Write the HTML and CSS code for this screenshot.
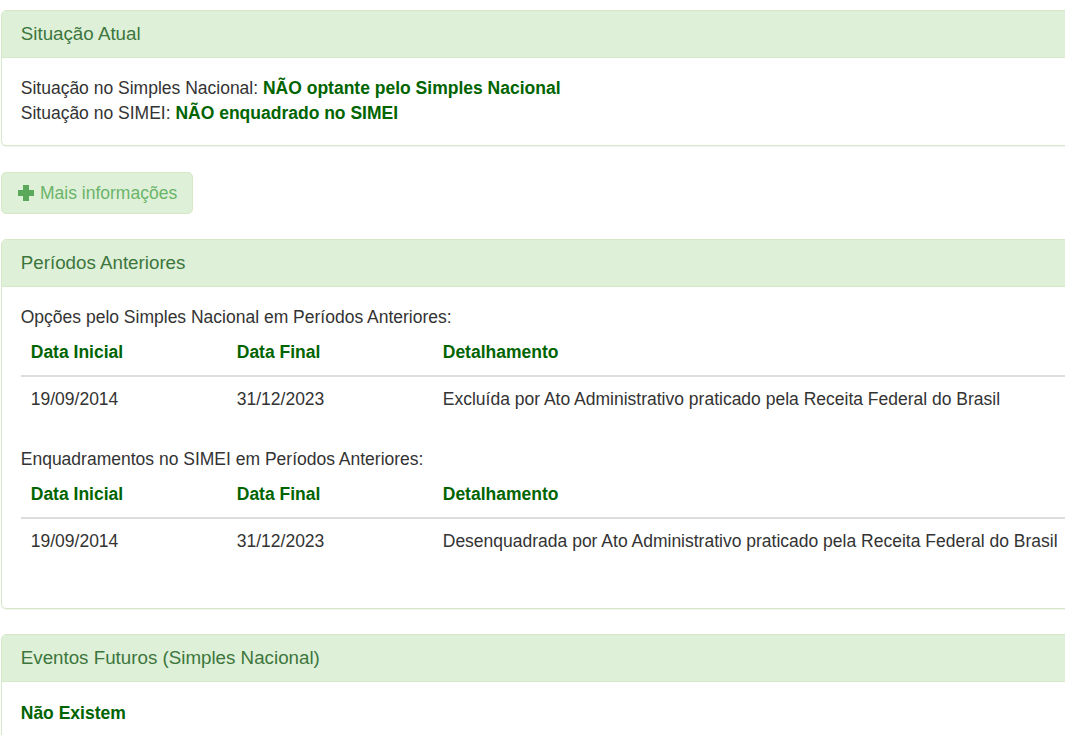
FILE: index.html
```html
<!DOCTYPE html>
<html lang="pt-BR">
<head>
    <meta charset="UTF-8">
    <meta name="viewport" content="width=device-width, initial-scale=1.0">
    <title>Consulta Optantes</title>
    <link rel="stylesheet" href="styles.css">
</head>
<body>
    <div class="page">

        <!-- Situação atual -->
        <div class="panel">
            <div class="panel-heading">Situação Atual</div>
            <div class="panel-body">
                <div>Situação no Simples Nacional: <span class="destaque">NÃO optante pelo Simples Nacional</span></div>
                <div>Situação no SIMEI: <span class="destaque">NÃO enquadrado no SIMEI</span></div>
            </div>
        </div>

        <button class="btn-info-extra" type="button" disabled>
            <svg class="icon-plus" width="16" height="16" viewBox="0 0 16 16" aria-hidden="true">
                <path d="M5 0h6v5h5v6h-5v5h-6v-5h-5v-6h5z"/>
            </svg>
            Mais informações
        </button>

        <!-- Períodos anteriores -->
        <div class="panel">
            <div class="panel-heading">Períodos Anteriores</div>
            <div class="panel-body panel-body-tabelas">
                <div>Opções pelo Simples Nacional em Períodos Anteriores:</div>
                <table class="tabela">
                    <thead>
                        <tr>
                            <th class="col-data">Data Inicial</th>
                            <th class="col-data">Data Final</th>
                            <th>Detalhamento</th>
                        </tr>
                    </thead>
                    <tbody>
                        <tr>
                            <td>19/09/2014</td>
                            <td>31/12/2023</td>
                            <td>Excluída por Ato Administrativo praticado pela Receita Federal do Brasil</td>
                        </tr>
                    </tbody>
                </table>

                <div>Enquadramentos no SIMEI em Períodos Anteriores:</div>
                <table class="tabela">
                    <thead>
                        <tr>
                            <th class="col-data">Data Inicial</th>
                            <th class="col-data">Data Final</th>
                            <th>Detalhamento</th>
                        </tr>
                    </thead>
                    <tbody>
                        <tr>
                            <td>19/09/2014</td>
                            <td>31/12/2023</td>
                            <td>Desenquadrada por Ato Administrativo praticado pela Receita Federal do Brasil</td>
                        </tr>
                    </tbody>
                </table>
            </div>
        </div>

        <!-- Eventos futuros -->
        <div class="panel">
            <div class="panel-heading">Eventos Futuros (Simples Nacional)</div>
            <div class="panel-body">
                <span class="destaque">Não Existem</span>
            </div>
        </div>

    </div>
</body>
</html>
```

FILE: styles.css
```css
/* Reset */
* {
    margin: 0;
    padding: 0;
    box-sizing: border-box;
}

html, body {
    overflow: hidden;
}

body {
    font-family: "Liberation Sans", Arial, sans-serif;
    font-size: 17.5px;
    line-height: 25px;
    color: #333333;
    background-color: #ffffff;
}

/* panels run on past the right edge of the window */
.page {
    width: 1140px;
    margin-left: 1px;
    padding-top: 10px;
}

/* Panels */
.panel {
    border: 1px solid #d6e9c6;
    border-radius: 5px;
    background-color: #ffffff;
    box-shadow: 0 1px 1px rgba(0, 0, 0, 0.05);
    margin-bottom: 25px;
}

.panel-heading {
    background-color: #dff0d8;
    color: #3c763d;
    border-bottom: 1px solid #d6e9c6;
    border-radius: 4px 4px 0 0;
    padding: 12.5px 18.75px;
    font-size: 18.75px;
    line-height: 1.1;
}

.panel-body {
    padding: 18.75px;
}

.panel-body-tabelas {
    padding-top: 17.75px;
    padding-bottom: 19.75px;
}

.destaque {
    color: #006400;
    font-weight: bold;
}

/* Button */
.btn-info-extra {
    display: inline-flex;
    align-items: center;
    gap: 6px;
    height: 42px;
    padding: 0 15px 0 16px;
    margin-top: 1px;
    margin-bottom: 25px;
    font-family: inherit;
    font-size: 17.5px;
    line-height: 25px;
    color: #6ab46a;
    background-color: #dff0d8;
    border: 1px solid #d6e9c6;
    border-radius: 5px;
    cursor: not-allowed;
}

.icon-plus {
    fill: #5aa85a;
    flex: none;
}

/* Tables */
.tabela {
    width: 100%;
    border-collapse: collapse;
    margin-bottom: 25px;
}

.tabela th,
.tabela td {
    text-align: left;
    vertical-align: top;
    padding: 10px;
    line-height: 25px;
}

.tabela th {
    color: #006400;
    font-weight: bold;
    border-bottom: 2px solid #dddddd;
}

.tabela td {
    border-top: 1px solid #dddddd;
}

.col-data {
    width: 206px;
}
```
